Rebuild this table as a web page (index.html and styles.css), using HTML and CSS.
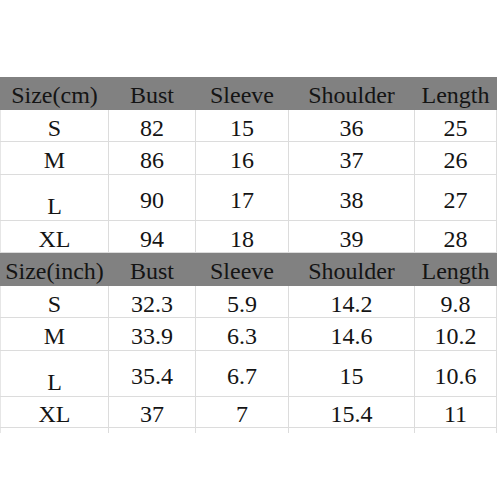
FILE: index.html
```html
<!DOCTYPE html>
<html>
<head>
<meta charset="utf-8">
<link rel="stylesheet" href="styles.css">
</head>
<body>
<div class="chart">
  <div class="row head"><span>Size(cm)</span><span>Bust</span><span>Sleeve</span><span>Shoulder</span><span>Length</span></div>
  <div class="row"><span>S</span><span>82</span><span>15</span><span>36</span><span>25</span></div>
  <div class="row m"><span>M</span><span>86</span><span>16</span><span>37</span><span>26</span></div>
  <div class="row tall"><span class="low">L</span><span>90</span><span>17</span><span>38</span><span>27</span></div>
  <div class="row"><span>XL</span><span>94</span><span>18</span><span>39</span><span>28</span></div>
  <div class="row head"><span>Size(inch)</span><span>Bust</span><span>Sleeve</span><span>Shoulder</span><span>Length</span></div>
  <div class="row"><span>S</span><span>32.3</span><span>5.9</span><span>14.2</span><span>9.8</span></div>
  <div class="row m"><span>M</span><span>33.9</span><span>6.3</span><span>14.6</span><span>10.2</span></div>
  <div class="row tall"><span class="low">L</span><span>35.4</span><span>6.7</span><span>15</span><span>10.6</span></div>
  <div class="row last"><span>XL</span><span>37</span><span>7</span><span>15.4</span><span>11</span></div>
  <div class="row stub"><span></span><span></span><span></span><span></span><span></span></div>
</div>
</body>
</html>
```
FILE: styles.css
```css
html, body {
  margin: 0;
  padding: 0;
  background: #ffffff;
}
body {
  font-family: "Liberation Serif", "Times New Roman", serif;
  font-size: 24px;
  color: #141414;
}
.chart {
  margin-top: 77px;
  width: 497px;
  display: flex;
  flex-direction: column;
}
.row {
  display: grid;
  grid-template-columns: 108px 87px 93px 126px 83px;
  height: 32px;
  border-bottom: 1px solid #dcdcdc;
  box-sizing: border-box;
}
.row span {
  display: flex;
  align-items: center;
  justify-content: center;
  border-left: 1px solid #dcdcdc;
  white-space: nowrap;
  line-height: 1;
  padding-top: 4px;
}
.row span:first-child {
  border-left: 1px solid #e6e6e6;
}
.row span:last-child {
  border-right: 1px solid #dcdcdc;
}
.head {
  height: 33px;
  background: #818181;
  border-bottom: none;
}
.head span,
.head span:first-child,
.head span:last-child {
  border-color: #818181;
  padding-top: 3px;
}
.m {
  height: 33px;
}
.tall {
  height: 46px;
}
.last {
  height: 31px;
}
.row span.low {
  align-items: flex-end;
  padding-bottom: 2px;
}
.stub {
  height: 5px;
  border-bottom: none;
}
```
